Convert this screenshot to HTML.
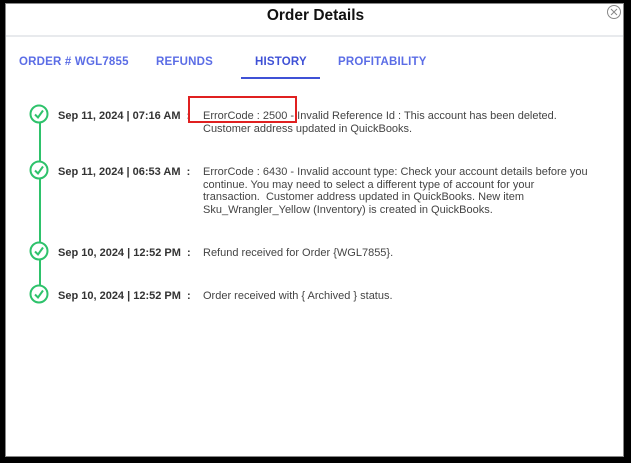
<!DOCTYPE html>
<html><head><style>
body{margin:0;width:631px;height:463px;background:#000;position:relative;overflow:hidden;font-family:"Liberation Sans",Arial,sans-serif}
.m{position:absolute;left:5px;top:3px;width:619px;height:454px;background:#fff;border:1px solid #888;box-sizing:border-box}
.t{position:absolute;left:0;width:619px;top:3px;text-align:center;font-weight:bold;font-size:15.5px;color:#111}
.hr{position:absolute;left:0;top:31px;width:617px;height:2px;background:#e8eaed}
.tab{position:absolute;top:52px;font-size:11.5px;font-weight:bold;color:#5b6de6;letter-spacing:.2px}
.ul{position:absolute;left:235px;top:73px;width:79px;height:2px;background:#3f51d6}
.line{position:absolute;left:33px;top:112px;width:2px;height:180px;background:#2ec26b}
.ck{position:absolute;left:23px;width:20px;height:20px}
.d{position:absolute;left:52px;font-size:11px;font-weight:bold;color:#333}
.x{position:absolute;left:197px;font-size:11px;color:#444;line-height:12.7px;width:392px}
</style></head><body><div class="m">
<div class="t">Order Details</div>
<svg style="position:absolute;left:600px;top:0" width="16" height="16"><circle cx="8" cy="8" r="6.5" fill="none" stroke="#888" stroke-width="1"/><path d="M5 5L11 11M11 5L5 11" stroke="#888"/></svg>
<div class="hr"></div>
<div class="tab" style="left:13px">ORDER # WGL7855</div>
<div class="tab" style="left:150px">REFUNDS</div>
<div class="tab" style="left:249px;color:#3f51d6">HISTORY</div>
<div class="tab" style="left:332px">PROFITABILITY</div>
<div class="ul"></div>
<div class="line"></div>
<svg class="ck" style="top:100px" viewBox="0 0 20 20"><circle cx="10" cy="10" r="8.5" fill="#fff" stroke="#2ec26b" stroke-width="2"/><path d="M6 10.5l3 3 5-7" fill="none" stroke="#2ec26b" stroke-width="2"/></svg>
<svg class="ck" style="top:156px" viewBox="0 0 20 20"><circle cx="10" cy="10" r="8.5" fill="#fff" stroke="#2ec26b" stroke-width="2"/><path d="M6 10.5l3 3 5-7" fill="none" stroke="#2ec26b" stroke-width="2"/></svg>
<svg class="ck" style="top:237px" viewBox="0 0 20 20"><circle cx="10" cy="10" r="8.5" fill="#fff" stroke="#2ec26b" stroke-width="2"/><path d="M6 10.5l3 3 5-7" fill="none" stroke="#2ec26b" stroke-width="2"/></svg>
<svg class="ck" style="top:280px" viewBox="0 0 20 20"><circle cx="10" cy="10" r="8.5" fill="#fff" stroke="#2ec26b" stroke-width="2"/><path d="M6 10.5l3 3 5-7" fill="none" stroke="#2ec26b" stroke-width="2"/></svg>
<div class="d" style="top:106px">Sep 11, 2024 | 07:16 AM &nbsp;:</div>
<div class="x" style="top:106px">ErrorCode : 2500 - Invalid Reference Id : This account has been deleted.<br>Customer address updated in QuickBooks.</div>
<div style="position:absolute;left:182px;top:92px;width:109px;height:27px;border:2px solid #e02020;box-sizing:border-box"></div>
<div class="d" style="top:162px">Sep 11, 2024 | 06:53 AM &nbsp;:</div>
<div class="x" style="top:162px">ErrorCode : 6430 - Invalid account type: Check your account details before you<br>continue. You may need to select a different type of account for your<br>transaction.&nbsp; Customer address updated in QuickBooks. New item<br>Sku_Wrangler_Yellow (Inventory) is created in QuickBooks.</div>
<div class="d" style="top:243px">Sep 10, 2024 | 12:52 PM &nbsp;:</div>
<div class="x" style="top:243px">Refund received for Order {WGL7855}.</div>
<div class="d" style="top:286px">Sep 10, 2024 | 12:52 PM &nbsp;:</div>
<div class="x" style="top:286px">Order received with { Archived } status.</div>
</div></body></html>
